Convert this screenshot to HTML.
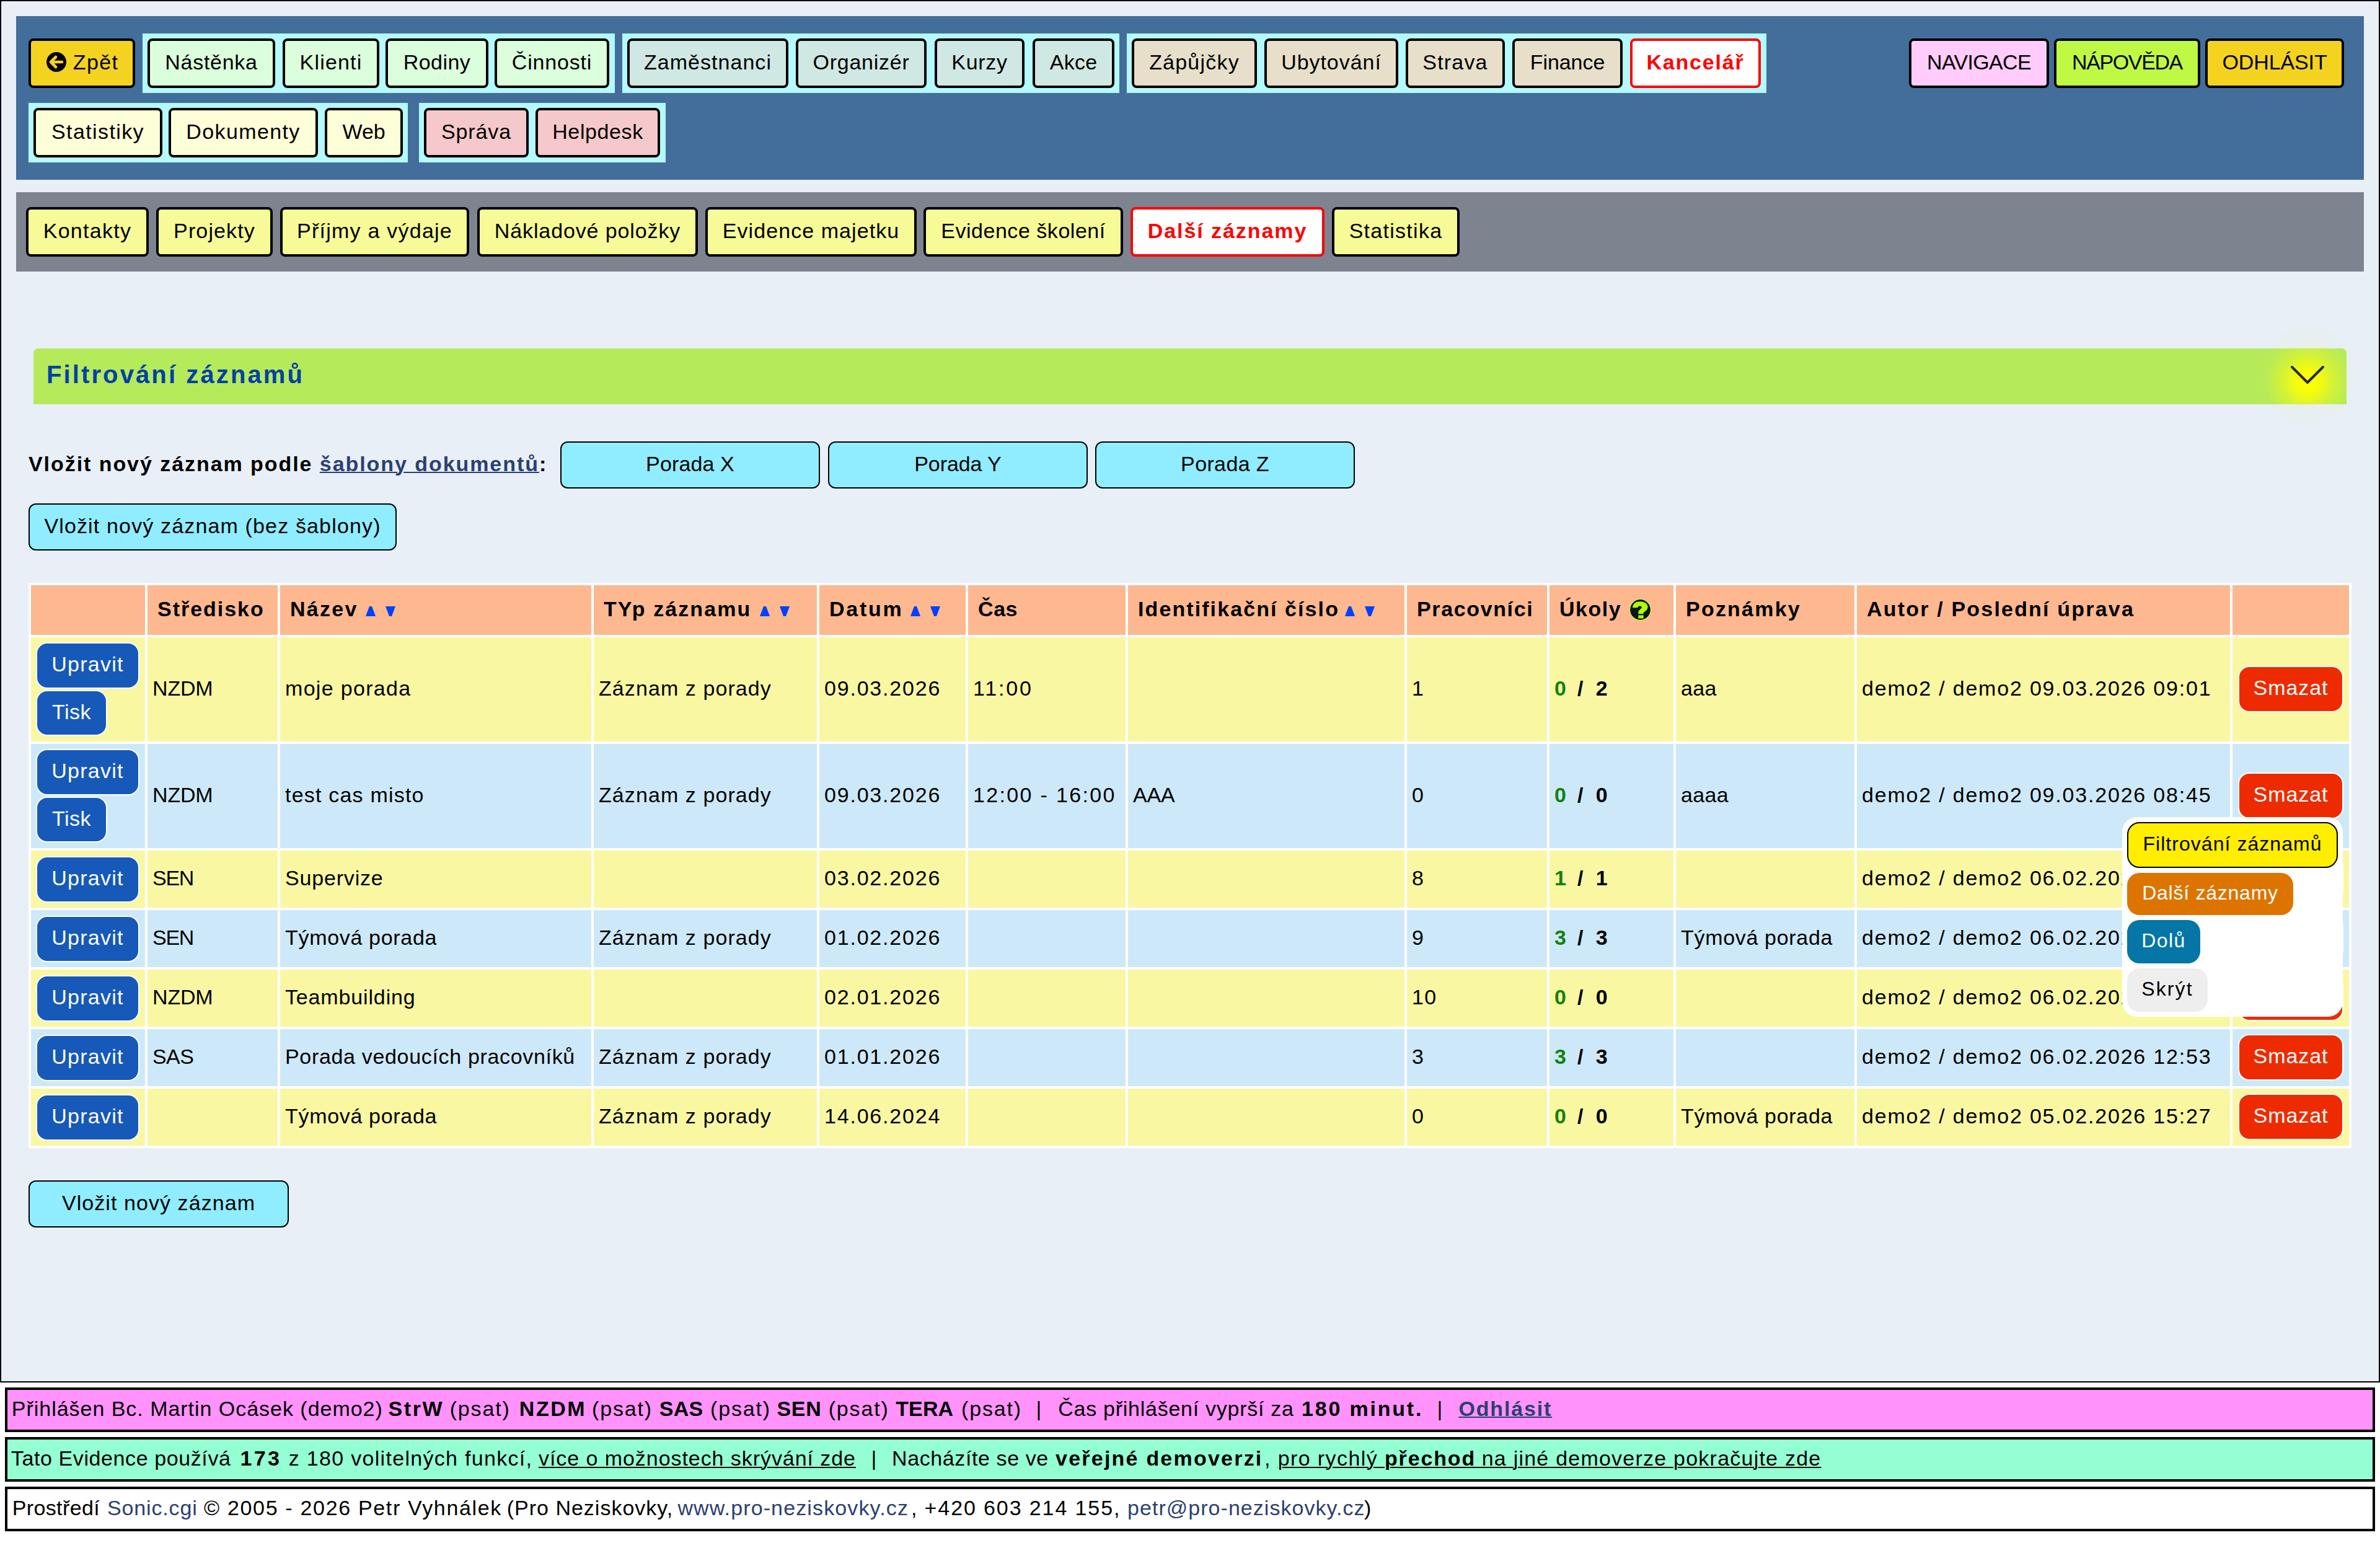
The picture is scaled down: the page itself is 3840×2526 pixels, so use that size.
<!DOCTYPE html><html><head><meta charset="utf-8"><style>
html,body{margin:0;padding:0}
body{width:3840px;height:2526px;position:relative;overflow:hidden;background:#fff;font-family:"Liberation Sans", sans-serif;font-size:34px;color:#000;font-kerning:normal}
.a{position:absolute;box-sizing:content-box}
.t{position:relative;top:-2px}
.ft .t{top:0}
.ttl .t{top:-3px}
.fc{display:flex;align-items:center;justify-content:center;white-space:nowrap}
.cell{display:flex;align-items:center;white-space:nowrap;overflow:visible}
.grn{color:#158010}
.lk{color:#2c4070;text-decoration:underline;text-decoration-thickness:2px;text-underline-offset:1px}
.lk2{color:#2c4070}
u{text-decoration-thickness:2px;text-underline-offset:3px}
.ft{white-space:nowrap;line-height:40px}
.b{font-weight:bold}
.u{text-decoration:underline;text-decoration-thickness:2px;text-underline-offset:2px}
</style></head><body><div class="a" style="left:0px;top:0px;width:3840px;height:2230px;background:#000;"></div>
<div class="a" style="left:2px;top:2px;width:3836px;height:2226px;background:#e8eff7;"></div>
<div class="a" style="left:26px;top:26px;width:3788px;height:264px;background:#436e9b;"></div>
<div class="a" style="left:230px;top:54px;width:762px;height:96px;background:#b3f9fd;"></div>
<div class="a" style="left:1004px;top:54px;width:802px;height:96px;background:#b3f9fd;"></div>
<div class="a" style="left:1818px;top:54px;width:1032px;height:96px;background:#b3f9fd;"></div>
<div class="a" style="left:46px;top:166px;width:612px;height:96px;background:#b3f9fd;"></div>
<div class="a" style="left:676px;top:166px;width:398px;height:96px;background:#b3f9fd;"></div>
<div class="a fc" style="left:46px;top:62px;width:164px;height:72px;background:#f4d320;border:4px solid #000;border-radius:8px;"><svg width="32" height="32" viewBox="0 0 32 32" style="margin-right:11px;margin-left:2px;flex:none;position:relative;top:-2px"><circle cx="16" cy="16" r="16" fill="#000"/><path d="M7 16 L15 8 M7 16 L15 24 M7 16 L25 16" stroke="#f4d320" stroke-width="4.6" stroke-linecap="round" fill="none"/></svg><span><span class="t" style="letter-spacing:1.36px">Zpět</span></span></div>
<div class="a fc" style="left:238px;top:62px;width:198px;height:72px;background:#dbffdc;border:4px solid #000;border-radius:8px;"><span><span class="t" style="letter-spacing:0.71px">Nástěnka</span></span></div>
<div class="a fc" style="left:456px;top:62px;width:148px;height:72px;background:#dbffdc;border:4px solid #000;border-radius:8px;"><span><span class="t" style="letter-spacing:1.17px">Klienti</span></span></div>
<div class="a fc" style="left:622px;top:62px;width:158px;height:72px;background:#dbffdc;border:4px solid #000;border-radius:8px;"><span><span class="t" style="letter-spacing:0.43px">Rodiny</span></span></div>
<div class="a fc" style="left:798px;top:62px;width:177px;height:72px;background:#dbffdc;border:4px solid #000;border-radius:8px;"><span><span class="t" style="letter-spacing:0.83px">Činnosti</span></span></div>
<div class="a fc" style="left:1012px;top:62px;width:252px;height:72px;background:#d0e8e3;border:4px solid #000;border-radius:8px;"><span><span class="t" style="letter-spacing:1.03px">Zaměstnanci</span></span></div>
<div class="a fc" style="left:1284px;top:62px;width:203px;height:72px;background:#d0e8e3;border:4px solid #000;border-radius:8px;"><span><span class="t" style="letter-spacing:0.76px">Organizér</span></span></div>
<div class="a fc" style="left:1508px;top:62px;width:137px;height:72px;background:#d0e8e3;border:4px solid #000;border-radius:8px;"><span><span class="t" style="letter-spacing:0.67px">Kurzy</span></span></div>
<div class="a fc" style="left:1666px;top:62px;width:124px;height:72px;background:#d0e8e3;border:4px solid #000;border-radius:8px;"><span><span class="t" style="letter-spacing:0.25px">Akce</span></span></div>
<div class="a fc" style="left:1826px;top:62px;width:194px;height:72px;background:#e7dfca;border:4px solid #000;border-radius:8px;"><span><span class="t" style="letter-spacing:1.21px">Zápůjčky</span></span></div>
<div class="a fc" style="left:2040px;top:62px;width:208px;height:72px;background:#e7dfca;border:4px solid #000;border-radius:8px;"><span><span class="t" style="letter-spacing:0.96px">Ubytování</span></span></div>
<div class="a fc" style="left:2268px;top:62px;width:152px;height:72px;background:#e7dfca;border:4px solid #000;border-radius:8px;"><span><span class="t" style="letter-spacing:1.20px">Strava</span></span></div>
<div class="a fc" style="left:2440px;top:62px;width:170px;height:72px;background:#e7dfca;border:4px solid #000;border-radius:8px;"><span><span class="t" style="letter-spacing:-0.06px">Finance</span></span></div>
<div class="a fc" style="left:2630px;top:62px;width:203px;height:72px;background:#fff;border:4px solid #f00;border-radius:8px;color:#f00;font-weight:bold;"><span><span class="t" style="letter-spacing:1.82px">Kancelář</span></span></div>
<div class="a fc" style="left:3080px;top:62px;width:218px;height:72px;background:#ffccfb;border:4px solid #000;border-radius:8px;"><span><span class="t" style="letter-spacing:-0.67px">NAVIGACE</span></span></div>
<div class="a fc" style="left:3314px;top:62px;width:228px;height:72px;background:#bff944;border:4px solid #000;border-radius:8px;"><span><span class="t" style="letter-spacing:-1.39px">NÁPOVĚDA</span></span></div>
<div class="a fc" style="left:3558px;top:62px;width:216px;height:72px;background:#f4d320;border:4px solid #000;border-radius:8px;"><span><span class="t" style="letter-spacing:-0.10px">ODHLÁSIT</span></span></div>
<div class="a fc" style="left:54px;top:174px;width:200px;height:72px;background:#fdffd8;border:4px solid #000;border-radius:8px;"><span><span class="t" style="letter-spacing:1.39px">Statistiky</span></span></div>
<div class="a fc" style="left:272px;top:174px;width:233px;height:72px;background:#fdffd8;border:4px solid #000;border-radius:8px;"><span><span class="t" style="letter-spacing:1.39px">Dokumenty</span></span></div>
<div class="a fc" style="left:524px;top:174px;width:118px;height:72px;background:#fdffd8;border:4px solid #000;border-radius:8px;"><span><span class="t" style="letter-spacing:-0.18px">Web</span></span></div>
<div class="a fc" style="left:684px;top:174px;width:161px;height:72px;background:#f5c9cb;border:4px solid #000;border-radius:8px;"><span><span class="t" style="letter-spacing:0.85px">Správa</span></span></div>
<div class="a fc" style="left:864px;top:174px;width:193px;height:72px;background:#f5c9cb;border:4px solid #000;border-radius:8px;"><span><span class="t" style="letter-spacing:0.60px">Helpdesk</span></span></div>
<div class="a" style="left:26px;top:310px;width:3788px;height:128px;background:#7e8390;"></div>
<div class="a fc" style="left:42px;top:334px;width:190px;height:72px;background:#f7fb97;border:4px solid #000;border-radius:8px;"><span><span class="t" style="letter-spacing:1.29px">Kontakty</span></span></div>
<div class="a fc" style="left:252px;top:334px;width:180px;height:72px;background:#f7fb97;border:4px solid #000;border-radius:8px;"><span><span class="t" style="letter-spacing:1.12px">Projekty</span></span></div>
<div class="a fc" style="left:452px;top:334px;width:297px;height:72px;background:#f7fb97;border:4px solid #000;border-radius:8px;"><span><span class="t" style="letter-spacing:1.24px">Příjmy a výdaje</span></span></div>
<div class="a fc" style="left:770px;top:334px;width:348px;height:72px;background:#f7fb97;border:4px solid #000;border-radius:8px;"><span><span class="t" style="letter-spacing:0.88px">Nákladové položky</span></span></div>
<div class="a fc" style="left:1138px;top:334px;width:333px;height:72px;background:#f7fb97;border:4px solid #000;border-radius:8px;"><span><span class="t" style="letter-spacing:1.07px">Evidence majetku</span></span></div>
<div class="a fc" style="left:1490px;top:334px;width:314px;height:72px;background:#f7fb97;border:4px solid #000;border-radius:8px;"><span><span class="t" style="letter-spacing:0.53px">Evidence školení</span></span></div>
<div class="a fc" style="left:2149px;top:334px;width:198px;height:72px;background:#f7fb97;border:4px solid #000;border-radius:8px;"><span><span class="t" style="letter-spacing:1.28px">Statistika</span></span></div>
<div class="a fc" style="left:1824px;top:334px;width:305px;height:72px;background:#fff;border:4px solid #f00;border-radius:8px;color:#f00;font-weight:bold;"><span><span class="t" style="letter-spacing:1.94px">Další záznamy</span></span></div>
<div class="a" style="left:3613px;top:495px;width:220px;height:220px;border-radius:50%;background:radial-gradient(circle closest-side, rgba(236,242,190,.6) 0%, rgba(234,240,215,.3) 50%, rgba(232,239,247,0) 80%)"></div>
<div class="a" style="left:54px;top:562px;width:3732px;height:90px;background:#b5ea5b;border-radius:8px 8px 0 0;overflow:hidden"><div class="a" style="left:3559px;top:-57px;width:220px;height:220px;border-radius:50%;background:radial-gradient(circle closest-side, rgba(255,255,0,1) 0%, rgba(255,255,0,.9) 16%, rgba(240,250,20,.5) 38%, rgba(200,240,60,.15) 62%, rgba(181,234,91,0) 90%)"></div></div>
<div class="a ttl" style="left:75px;top:562px;height:90px;display:flex;align-items:center;color:#0040a8;font-weight:bold;font-size:40px;white-space:nowrap"><span class="t" style="letter-spacing:3.11px">Filtrování záznamů</span></div>
<svg class="a" style="left:3693px;top:586px" width="60" height="40" viewBox="0 0 60 40"><path d="M5 6 L30 31 L55 6" stroke="#232930" stroke-width="4" stroke-linecap="round" stroke-linejoin="round" fill="none"/></svg>
<div class="a" style="left:46px;top:712px;height:76px;display:flex;align-items:center;font-weight:bold;white-space:nowrap"><span><span class="t" style="letter-spacing:1.94px">Vložit nový záznam podle </span><a class="lk"><span class="t" style="letter-spacing:1.94px">šablony dokumentů</span></a><span class="t" style="letter-spacing:2.47px">:</span></span></div>
<div class="a fc" style="left:904px;top:712px;width:415px;height:72px;background:#8fedff;border:2px solid #000;border-radius:12px;"><span><span class="t" style="letter-spacing:0.13px">Porada X</span></span></div>
<div class="a fc" style="left:1336px;top:712px;width:415px;height:72px;background:#8fedff;border:2px solid #000;border-radius:12px;"><span><span class="t" style="letter-spacing:-0.09px">Porada Y</span></span></div>
<div class="a fc" style="left:1767px;top:712px;width:415px;height:72px;background:#8fedff;border:2px solid #000;border-radius:12px;"><span><span class="t" style="letter-spacing:0.37px">Porada Z</span></span></div>
<div class="a fc" style="left:46px;top:812px;width:590px;height:72px;background:#8fedff;border:2px solid #000;border-radius:12px;"><span><span class="t" style="letter-spacing:1.15px">Vložit nový záznam (bez šablony)</span></span></div>
<div class="a fc" style="left:46px;top:1904px;width:416px;height:72px;background:#8fedff;border:2px solid #000;border-radius:12px;"><span><span class="t" style="letter-spacing:1.07px">Vložit nový záznam</span></span></div>
<div class="a" style="left:46px;top:940px;width:3748px;height:912px;background:#fff;"></div>
<div class="a cell" style="left:50px;top:944px;width:168px;height:80px;background:#fdb88f;padding-left:16px;font-weight:bold;"><span></span></div>
<div class="a cell" style="left:238px;top:944px;width:194px;height:80px;background:#fdb88f;padding-left:16px;font-weight:bold;"><span><span class="t" style="letter-spacing:1.97px">Středisko</span></span></div>
<div class="a cell" style="left:452px;top:944px;width:486px;height:80px;background:#fdb88f;padding-left:16px;font-weight:bold;"><span><span class="t" style="letter-spacing:2.26px">Název</span></span></div>
<div class="a cell" style="left:958px;top:944px;width:344px;height:80px;background:#fdb88f;padding-left:16px;font-weight:bold;"><span><span class="t" style="letter-spacing:2.09px">TYp záznamu</span></span></div>
<div class="a cell" style="left:1322px;top:944px;width:220px;height:80px;background:#fdb88f;padding-left:16px;font-weight:bold;"><span><span class="t" style="letter-spacing:2.76px">Datum</span></span></div>
<div class="a cell" style="left:1562px;top:944px;width:238px;height:80px;background:#fdb88f;padding-left:16px;font-weight:bold;"><span><span class="t" style="letter-spacing:0.58px">Čas</span></span></div>
<div class="a cell" style="left:1820px;top:944px;width:430px;height:80px;background:#fdb88f;padding-left:16px;font-weight:bold;"><span><span class="t" style="letter-spacing:2.09px">Identifikační číslo</span></span></div>
<div class="a cell" style="left:2270px;top:944px;width:210px;height:80px;background:#fdb88f;padding-left:16px;font-weight:bold;"><span><span class="t" style="letter-spacing:1.63px">Pracovníci</span></span></div>
<div class="a cell" style="left:2500px;top:944px;width:184px;height:80px;background:#fdb88f;padding-left:16px;font-weight:bold;"><span><span class="t" style="letter-spacing:1.52px">Úkoly</span></span></div>
<div class="a cell" style="left:2704px;top:944px;width:272px;height:80px;background:#fdb88f;padding-left:16px;font-weight:bold;"><span><span class="t" style="letter-spacing:2.22px">Poznámky</span></span></div>
<div class="a cell" style="left:2996px;top:944px;width:586px;height:80px;background:#fdb88f;padding-left:16px;font-weight:bold;"><span><span class="t" style="letter-spacing:2.19px">Autor / Poslední úprava</span></span></div>
<div class="a cell" style="left:3602px;top:944px;width:172px;height:80px;background:#fdb88f;padding-left:16px;font-weight:bold;"><span></span></div>
<svg class="a" style="left:590px;top:978px" width="16" height="16" viewBox="0 0 16 16"><path d="M6 0H10L16 16H0Z" fill="#0040ff"/></svg><svg class="a" style="left:622px;top:978px" width="16" height="16" viewBox="0 0 16 16"><path d="M0 0H16L10 16H6Z" fill="#0040ff"/></svg><svg class="a" style="left:1226px;top:978px" width="16" height="16" viewBox="0 0 16 16"><path d="M6 0H10L16 16H0Z" fill="#0040ff"/></svg><svg class="a" style="left:1258px;top:978px" width="16" height="16" viewBox="0 0 16 16"><path d="M0 0H16L10 16H6Z" fill="#0040ff"/></svg><svg class="a" style="left:1469px;top:978px" width="16" height="16" viewBox="0 0 16 16"><path d="M6 0H10L16 16H0Z" fill="#0040ff"/></svg><svg class="a" style="left:1501px;top:978px" width="16" height="16" viewBox="0 0 16 16"><path d="M0 0H16L10 16H6Z" fill="#0040ff"/></svg><svg class="a" style="left:2170px;top:978px" width="16" height="16" viewBox="0 0 16 16"><path d="M6 0H10L16 16H0Z" fill="#0040ff"/></svg><svg class="a" style="left:2202px;top:978px" width="16" height="16" viewBox="0 0 16 16"><path d="M0 0H16L10 16H6Z" fill="#0040ff"/></svg>
<svg class="a" style="left:2629px;top:966px" width="35" height="35" viewBox="0 0 35 35"><circle cx="17.5" cy="17.5" r="17" fill="#0c1424" stroke="#d8ff20" stroke-width="1.2"/><path d="M5.1,14.3 C5.1,7.5 10.5,4.3 17.5,4.3 C24.5,4.3 29.6,8 29.6,13 C29.6,17.5 25.5,20 22.7,22 L22.7,24.3 L14.3,24.3 L14.3,21.5 C14.3,18 19.8,16 19.8,13.7 C19.8,12.3 18.5,11.6 17,11.6 C15,11.6 13.3,12.5 13.3,14.3 Z" fill="#b0ff00"/><rect x="14.3" y="26.4" width="8.4" height="5.1" fill="#b0ff00"/></svg>
<div class="a cell" style="left:50px;top:1028px;width:176px;height:168px;background:#f9f7a2;padding-left:8px;"><span></span></div>
<div class="a fc" style="left:58px;top:1036px;width:163px;height:71px;background:#1659b9;border:2px solid #fff;border-radius:18px;color:#fff;"><span><span class="t" style="letter-spacing:1.27px">Upravit</span></span></div>
<div class="a fc" style="left:58px;top:1113px;width:111px;height:70px;background:#1659b9;border:2px solid #fff;border-radius:18px;color:#fff;"><span><span class="t" style="letter-spacing:0.50px">Tisk</span></span></div>
<div class="a cell" style="left:238px;top:1028px;width:202px;height:168px;background:#f9f7a2;padding-left:8px;"><span><span class="t" style="letter-spacing:-0.17px">NZDM</span></span></div>
<div class="a cell" style="left:452px;top:1028px;width:494px;height:168px;background:#f9f7a2;padding-left:8px;"><span><span class="t" style="letter-spacing:1.31px">moje porada</span></span></div>
<div class="a cell" style="left:958px;top:1028px;width:352px;height:168px;background:#f9f7a2;padding-left:8px;"><span><span class="t" style="letter-spacing:1.08px">Záznam z porady</span></span></div>
<div class="a cell" style="left:1322px;top:1028px;width:228px;height:168px;background:#f9f7a2;padding-left:8px;"><span><span class="t" style="letter-spacing:1.80px">09.03.2026</span></span></div>
<div class="a cell" style="left:1562px;top:1028px;width:246px;height:168px;background:#f9f7a2;padding-left:8px;"><span><span class="t" style="letter-spacing:2.83px">11:00</span></span></div>
<div class="a cell" style="left:1820px;top:1028px;width:438px;height:168px;background:#f9f7a2;padding-left:8px;"><span></span></div>
<div class="a cell" style="left:2270px;top:1028px;width:218px;height:168px;background:#f9f7a2;padding-left:8px;"><span><span class="t" style="letter-spacing:1.44px">1</span></span></div>
<div class="a cell" style="left:2500px;top:1028px;width:192px;height:168px;background:#f9f7a2;padding-left:8px;"><span><b><span class="t grn" style="letter-spacing:3.34px">0</span><span class="t" style="letter-spacing:5.38px"> / </span><span class="t" style="letter-spacing:3.34px">2</span></b></span></div>
<div class="a cell" style="left:2704px;top:1028px;width:280px;height:168px;background:#f9f7a2;padding-left:8px;"><span><span class="t" style="letter-spacing:0.30px">aaa</span></span></div>
<div class="a cell" style="left:2996px;top:1028px;width:594px;height:168px;background:#f9f7a2;padding-left:8px;"><span><span class="t" style="letter-spacing:1.80px">demo2 / demo2 09.03.2026 09:01</span></span></div>
<div class="a cell" style="left:3602px;top:1028px;width:180px;height:168px;background:#f9f7a2;padding-left:8px;"><span></span></div>
<div class="a fc" style="left:3611px;top:1074px;width:166px;height:71px;background:#ee2b00;border:2px solid #fff;border-radius:18px;color:#fff;"><span><span class="t" style="letter-spacing:0.93px">Smazat</span></span></div>
<div class="a cell" style="left:50px;top:1200px;width:176px;height:168px;background:#cde9f9;padding-left:8px;"><span></span></div>
<div class="a fc" style="left:58px;top:1208px;width:163px;height:71px;background:#1659b9;border:2px solid #fff;border-radius:18px;color:#fff;"><span><span class="t" style="letter-spacing:1.27px">Upravit</span></span></div>
<div class="a fc" style="left:58px;top:1285px;width:111px;height:70px;background:#1659b9;border:2px solid #fff;border-radius:18px;color:#fff;"><span><span class="t" style="letter-spacing:0.50px">Tisk</span></span></div>
<div class="a cell" style="left:238px;top:1200px;width:202px;height:168px;background:#cde9f9;padding-left:8px;"><span><span class="t" style="letter-spacing:-0.17px">NZDM</span></span></div>
<div class="a cell" style="left:452px;top:1200px;width:494px;height:168px;background:#cde9f9;padding-left:8px;"><span><span class="t" style="letter-spacing:1.20px">test cas misto</span></span></div>
<div class="a cell" style="left:958px;top:1200px;width:352px;height:168px;background:#cde9f9;padding-left:8px;"><span><span class="t" style="letter-spacing:1.08px">Záznam z porady</span></span></div>
<div class="a cell" style="left:1322px;top:1200px;width:228px;height:168px;background:#cde9f9;padding-left:8px;"><span><span class="t" style="letter-spacing:1.80px">09.03.2026</span></span></div>
<div class="a cell" style="left:1562px;top:1200px;width:246px;height:168px;background:#cde9f9;padding-left:8px;"><span><span class="t" style="letter-spacing:2.34px">12:00 - 16:00</span></span></div>
<div class="a cell" style="left:1820px;top:1200px;width:438px;height:168px;background:#cde9f9;padding-left:8px;"><span><span class="t" style="letter-spacing:-0.20px">AAA</span></span></div>
<div class="a cell" style="left:2270px;top:1200px;width:218px;height:168px;background:#cde9f9;padding-left:8px;"><span><span class="t" style="letter-spacing:1.44px">0</span></span></div>
<div class="a cell" style="left:2500px;top:1200px;width:192px;height:168px;background:#cde9f9;padding-left:8px;"><span><b><span class="t grn" style="letter-spacing:3.34px">0</span><span class="t" style="letter-spacing:5.38px"> / </span><span class="t" style="letter-spacing:3.34px">0</span></b></span></div>
<div class="a cell" style="left:2704px;top:1200px;width:280px;height:168px;background:#cde9f9;padding-left:8px;"><span><span class="t" style="letter-spacing:0.30px">aaaa</span></span></div>
<div class="a cell" style="left:2996px;top:1200px;width:594px;height:168px;background:#cde9f9;padding-left:8px;"><span><span class="t" style="letter-spacing:1.80px">demo2 / demo2 09.03.2026 08:45</span></span></div>
<div class="a cell" style="left:3602px;top:1200px;width:180px;height:168px;background:#cde9f9;padding-left:8px;"><span></span></div>
<div class="a fc" style="left:3611px;top:1246px;width:166px;height:71px;background:#ee2b00;border:2px solid #fff;border-radius:18px;color:#fff;"><span><span class="t" style="letter-spacing:0.93px">Smazat</span></span></div>
<div class="a cell" style="left:50px;top:1372px;width:176px;height:92px;background:#f9f7a2;padding-left:8px;"><span></span></div>
<div class="a fc" style="left:58px;top:1381px;width:163px;height:71px;background:#1659b9;border:2px solid #fff;border-radius:18px;color:#fff;"><span><span class="t" style="letter-spacing:1.27px">Upravit</span></span></div>
<div class="a cell" style="left:238px;top:1372px;width:202px;height:92px;background:#f9f7a2;padding-left:8px;"><span><span class="t" style="letter-spacing:-1.28px">SEN</span></span></div>
<div class="a cell" style="left:452px;top:1372px;width:494px;height:92px;background:#f9f7a2;padding-left:8px;"><span><span class="t" style="letter-spacing:0.82px">Supervize</span></span></div>
<div class="a cell" style="left:958px;top:1372px;width:352px;height:92px;background:#f9f7a2;padding-left:8px;"><span></span></div>
<div class="a cell" style="left:1322px;top:1372px;width:228px;height:92px;background:#f9f7a2;padding-left:8px;"><span><span class="t" style="letter-spacing:1.80px">03.02.2026</span></span></div>
<div class="a cell" style="left:1562px;top:1372px;width:246px;height:92px;background:#f9f7a2;padding-left:8px;"><span></span></div>
<div class="a cell" style="left:1820px;top:1372px;width:438px;height:92px;background:#f9f7a2;padding-left:8px;"><span></span></div>
<div class="a cell" style="left:2270px;top:1372px;width:218px;height:92px;background:#f9f7a2;padding-left:8px;"><span><span class="t" style="letter-spacing:1.44px">8</span></span></div>
<div class="a cell" style="left:2500px;top:1372px;width:192px;height:92px;background:#f9f7a2;padding-left:8px;"><span><b><span class="t grn" style="letter-spacing:3.34px">1</span><span class="t" style="letter-spacing:5.38px"> / </span><span class="t" style="letter-spacing:3.34px">1</span></b></span></div>
<div class="a cell" style="left:2704px;top:1372px;width:280px;height:92px;background:#f9f7a2;padding-left:8px;"><span></span></div>
<div class="a cell" style="left:2996px;top:1372px;width:594px;height:92px;background:#f9f7a2;padding-left:8px;"><span><span class="t" style="letter-spacing:1.80px">demo2 / demo2 06.02.2026 13:10</span></span></div>
<div class="a cell" style="left:3602px;top:1372px;width:180px;height:92px;background:#f9f7a2;padding-left:8px;"><span></span></div>
<div class="a fc" style="left:3611px;top:1380px;width:166px;height:71px;background:#ee2b00;border:2px solid #fff;border-radius:18px;color:#fff;"><span><span class="t" style="letter-spacing:0.93px">Smazat</span></span></div>
<div class="a cell" style="left:50px;top:1468px;width:176px;height:92px;background:#cde9f9;padding-left:8px;"><span></span></div>
<div class="a fc" style="left:58px;top:1477px;width:163px;height:71px;background:#1659b9;border:2px solid #fff;border-radius:18px;color:#fff;"><span><span class="t" style="letter-spacing:1.27px">Upravit</span></span></div>
<div class="a cell" style="left:238px;top:1468px;width:202px;height:92px;background:#cde9f9;padding-left:8px;"><span><span class="t" style="letter-spacing:-1.28px">SEN</span></span></div>
<div class="a cell" style="left:452px;top:1468px;width:494px;height:92px;background:#cde9f9;padding-left:8px;"><span><span class="t" style="letter-spacing:0.68px">Týmová porada</span></span></div>
<div class="a cell" style="left:958px;top:1468px;width:352px;height:92px;background:#cde9f9;padding-left:8px;"><span><span class="t" style="letter-spacing:1.08px">Záznam z porady</span></span></div>
<div class="a cell" style="left:1322px;top:1468px;width:228px;height:92px;background:#cde9f9;padding-left:8px;"><span><span class="t" style="letter-spacing:1.80px">01.02.2026</span></span></div>
<div class="a cell" style="left:1562px;top:1468px;width:246px;height:92px;background:#cde9f9;padding-left:8px;"><span></span></div>
<div class="a cell" style="left:1820px;top:1468px;width:438px;height:92px;background:#cde9f9;padding-left:8px;"><span></span></div>
<div class="a cell" style="left:2270px;top:1468px;width:218px;height:92px;background:#cde9f9;padding-left:8px;"><span><span class="t" style="letter-spacing:1.44px">9</span></span></div>
<div class="a cell" style="left:2500px;top:1468px;width:192px;height:92px;background:#cde9f9;padding-left:8px;"><span><b><span class="t grn" style="letter-spacing:3.34px">3</span><span class="t" style="letter-spacing:5.38px"> / </span><span class="t" style="letter-spacing:3.34px">3</span></b></span></div>
<div class="a cell" style="left:2704px;top:1468px;width:280px;height:92px;background:#cde9f9;padding-left:8px;"><span><span class="t" style="letter-spacing:0.68px">Týmová porada</span></span></div>
<div class="a cell" style="left:2996px;top:1468px;width:594px;height:92px;background:#cde9f9;padding-left:8px;"><span><span class="t" style="letter-spacing:1.80px">demo2 / demo2 06.02.2026 13:05</span></span></div>
<div class="a cell" style="left:3602px;top:1468px;width:180px;height:92px;background:#cde9f9;padding-left:8px;"><span></span></div>
<div class="a fc" style="left:3611px;top:1476px;width:166px;height:71px;background:#ee2b00;border:2px solid #fff;border-radius:18px;color:#fff;"><span><span class="t" style="letter-spacing:0.93px">Smazat</span></span></div>
<div class="a cell" style="left:50px;top:1564px;width:176px;height:92px;background:#f9f7a2;padding-left:8px;"><span></span></div>
<div class="a fc" style="left:58px;top:1573px;width:163px;height:71px;background:#1659b9;border:2px solid #fff;border-radius:18px;color:#fff;"><span><span class="t" style="letter-spacing:1.27px">Upravit</span></span></div>
<div class="a cell" style="left:238px;top:1564px;width:202px;height:92px;background:#f9f7a2;padding-left:8px;"><span><span class="t" style="letter-spacing:-0.17px">NZDM</span></span></div>
<div class="a cell" style="left:452px;top:1564px;width:494px;height:92px;background:#f9f7a2;padding-left:8px;"><span><span class="t" style="letter-spacing:0.85px">Teambuilding</span></span></div>
<div class="a cell" style="left:958px;top:1564px;width:352px;height:92px;background:#f9f7a2;padding-left:8px;"><span></span></div>
<div class="a cell" style="left:1322px;top:1564px;width:228px;height:92px;background:#f9f7a2;padding-left:8px;"><span><span class="t" style="letter-spacing:1.80px">02.01.2026</span></span></div>
<div class="a cell" style="left:1562px;top:1564px;width:246px;height:92px;background:#f9f7a2;padding-left:8px;"><span></span></div>
<div class="a cell" style="left:1820px;top:1564px;width:438px;height:92px;background:#f9f7a2;padding-left:8px;"><span></span></div>
<div class="a cell" style="left:2270px;top:1564px;width:218px;height:92px;background:#f9f7a2;padding-left:8px;"><span><span class="t" style="letter-spacing:1.45px">10</span></span></div>
<div class="a cell" style="left:2500px;top:1564px;width:192px;height:92px;background:#f9f7a2;padding-left:8px;"><span><b><span class="t grn" style="letter-spacing:3.34px">0</span><span class="t" style="letter-spacing:5.38px"> / </span><span class="t" style="letter-spacing:3.34px">0</span></b></span></div>
<div class="a cell" style="left:2704px;top:1564px;width:280px;height:92px;background:#f9f7a2;padding-left:8px;"><span></span></div>
<div class="a cell" style="left:2996px;top:1564px;width:594px;height:92px;background:#f9f7a2;padding-left:8px;"><span><span class="t" style="letter-spacing:1.80px">demo2 / demo2 06.02.2026 12:58</span></span></div>
<div class="a cell" style="left:3602px;top:1564px;width:180px;height:92px;background:#f9f7a2;padding-left:8px;"><span></span></div>
<div class="a fc" style="left:3611px;top:1572px;width:166px;height:71px;background:#ee2b00;border:2px solid #fff;border-radius:18px;color:#fff;"><span><span class="t" style="letter-spacing:0.93px">Smazat</span></span></div>
<div class="a cell" style="left:50px;top:1660px;width:176px;height:92px;background:#cde9f9;padding-left:8px;"><span></span></div>
<div class="a fc" style="left:58px;top:1669px;width:163px;height:71px;background:#1659b9;border:2px solid #fff;border-radius:18px;color:#fff;"><span><span class="t" style="letter-spacing:1.27px">Upravit</span></span></div>
<div class="a cell" style="left:238px;top:1660px;width:202px;height:92px;background:#cde9f9;padding-left:8px;"><span><span class="t" style="letter-spacing:-0.58px">SAS</span></span></div>
<div class="a cell" style="left:452px;top:1660px;width:494px;height:92px;background:#cde9f9;padding-left:8px;"><span><span class="t" style="letter-spacing:0.67px">Porada vedoucích pracovníků</span></span></div>
<div class="a cell" style="left:958px;top:1660px;width:352px;height:92px;background:#cde9f9;padding-left:8px;"><span><span class="t" style="letter-spacing:1.08px">Záznam z porady</span></span></div>
<div class="a cell" style="left:1322px;top:1660px;width:228px;height:92px;background:#cde9f9;padding-left:8px;"><span><span class="t" style="letter-spacing:1.80px">01.01.2026</span></span></div>
<div class="a cell" style="left:1562px;top:1660px;width:246px;height:92px;background:#cde9f9;padding-left:8px;"><span></span></div>
<div class="a cell" style="left:1820px;top:1660px;width:438px;height:92px;background:#cde9f9;padding-left:8px;"><span></span></div>
<div class="a cell" style="left:2270px;top:1660px;width:218px;height:92px;background:#cde9f9;padding-left:8px;"><span><span class="t" style="letter-spacing:1.44px">3</span></span></div>
<div class="a cell" style="left:2500px;top:1660px;width:192px;height:92px;background:#cde9f9;padding-left:8px;"><span><b><span class="t grn" style="letter-spacing:3.34px">3</span><span class="t" style="letter-spacing:5.38px"> / </span><span class="t" style="letter-spacing:3.34px">3</span></b></span></div>
<div class="a cell" style="left:2704px;top:1660px;width:280px;height:92px;background:#cde9f9;padding-left:8px;"><span></span></div>
<div class="a cell" style="left:2996px;top:1660px;width:594px;height:92px;background:#cde9f9;padding-left:8px;"><span><span class="t" style="letter-spacing:1.80px">demo2 / demo2 06.02.2026 12:53</span></span></div>
<div class="a cell" style="left:3602px;top:1660px;width:180px;height:92px;background:#cde9f9;padding-left:8px;"><span></span></div>
<div class="a fc" style="left:3611px;top:1668px;width:166px;height:71px;background:#ee2b00;border:2px solid #fff;border-radius:18px;color:#fff;"><span><span class="t" style="letter-spacing:0.93px">Smazat</span></span></div>
<div class="a cell" style="left:50px;top:1756px;width:176px;height:92px;background:#f9f7a2;padding-left:8px;"><span></span></div>
<div class="a fc" style="left:58px;top:1765px;width:163px;height:71px;background:#1659b9;border:2px solid #fff;border-radius:18px;color:#fff;"><span><span class="t" style="letter-spacing:1.27px">Upravit</span></span></div>
<div class="a cell" style="left:238px;top:1756px;width:202px;height:92px;background:#f9f7a2;padding-left:8px;"><span></span></div>
<div class="a cell" style="left:452px;top:1756px;width:494px;height:92px;background:#f9f7a2;padding-left:8px;"><span><span class="t" style="letter-spacing:0.68px">Týmová porada</span></span></div>
<div class="a cell" style="left:958px;top:1756px;width:352px;height:92px;background:#f9f7a2;padding-left:8px;"><span><span class="t" style="letter-spacing:1.08px">Záznam z porady</span></span></div>
<div class="a cell" style="left:1322px;top:1756px;width:228px;height:92px;background:#f9f7a2;padding-left:8px;"><span><span class="t" style="letter-spacing:1.80px">14.06.2024</span></span></div>
<div class="a cell" style="left:1562px;top:1756px;width:246px;height:92px;background:#f9f7a2;padding-left:8px;"><span></span></div>
<div class="a cell" style="left:1820px;top:1756px;width:438px;height:92px;background:#f9f7a2;padding-left:8px;"><span></span></div>
<div class="a cell" style="left:2270px;top:1756px;width:218px;height:92px;background:#f9f7a2;padding-left:8px;"><span><span class="t" style="letter-spacing:1.44px">0</span></span></div>
<div class="a cell" style="left:2500px;top:1756px;width:192px;height:92px;background:#f9f7a2;padding-left:8px;"><span><b><span class="t grn" style="letter-spacing:3.34px">0</span><span class="t" style="letter-spacing:5.38px"> / </span><span class="t" style="letter-spacing:3.34px">0</span></b></span></div>
<div class="a cell" style="left:2704px;top:1756px;width:280px;height:92px;background:#f9f7a2;padding-left:8px;"><span><span class="t" style="letter-spacing:0.68px">Týmová porada</span></span></div>
<div class="a cell" style="left:2996px;top:1756px;width:594px;height:92px;background:#f9f7a2;padding-left:8px;"><span><span class="t" style="letter-spacing:1.80px">demo2 / demo2 05.02.2026 15:27</span></span></div>
<div class="a cell" style="left:3602px;top:1756px;width:180px;height:92px;background:#f9f7a2;padding-left:8px;"><span></span></div>
<div class="a fc" style="left:3611px;top:1764px;width:166px;height:71px;background:#ee2b00;border:2px solid #fff;border-radius:18px;color:#fff;"><span><span class="t" style="letter-spacing:0.93px">Smazat</span></span></div>
<div class="a" style="left:3424px;top:1318px;width:356px;height:322px;background:#fff;border-radius:24px"></div>
<div class="a fc" style="left:3432px;top:1326px;width:336px;height:70px;background:#ffee00;border:2px solid #000;border-radius:20px;font-size:32px"><span><span class="t dj" style="letter-spacing:1.04px">Filtrování záznamů</span></span></div>
<div class="a fc" style="left:3432px;top:1408px;width:268px;height:68px;background:#de7400;border-radius:20px;color:#fff;font-size:32px"><span><span class="t dj" style="letter-spacing:0.75px">Další záznamy</span></span></div>
<div class="a fc" style="left:3432px;top:1484px;width:118px;height:70px;background:#0576a6;border-radius:20px;color:#fff;font-size:32px"><span><span class="t dj" style="letter-spacing:1.38px">Dolů</span></span></div>
<div class="a fc" style="left:3432px;top:1562px;width:130px;height:70px;background:#eeeeee;border-radius:20px;font-size:32px"><span><span class="t dj" style="letter-spacing:2.08px">Skrýt</span></span></div>
<div class="a" style="left:8px;top:2238px;width:3816px;height:64px;background:#ff93fb;border:4px solid #000"></div>
<div class="a" style="left:8px;top:2318px;width:3816px;height:64px;background:#95ffd4;border:4px solid #000"></div>
<div class="a" style="left:8px;top:2398px;width:3816px;height:64px;background:#ffffff;border:4px solid #000"></div>
<span class="a ft " style="left:18.8px;top:2252px"><span class="t" style="letter-spacing:0.97px">Přihlášen Bc. Martin Ocásek (demo2)</span></span>
<span class="a ft b" style="left:626.6px;top:2252px"><span class="t" style="letter-spacing:2.52px">StrW</span></span>
<span class="a ft " style="left:725.7px;top:2252px"><span class="t" style="letter-spacing:1.83px">(psat)</span></span>
<span class="a ft b" style="left:837.8px;top:2252px"><span class="t" style="letter-spacing:2.55px">NZDM</span></span>
<span class="a ft " style="left:955px;top:2252px"><span class="t" style="letter-spacing:1.83px">(psat)</span></span>
<span class="a ft b" style="left:1063.7px;top:2252px"><span class="t" style="letter-spacing:0.31px">SAS</span></span>
<span class="a ft " style="left:1146px;top:2252px"><span class="t" style="letter-spacing:1.83px">(psat)</span></span>
<span class="a ft b" style="left:1253.6px;top:2252px"><span class="t" style="letter-spacing:0.59px">SEN</span></span>
<span class="a ft " style="left:1336.7px;top:2252px"><span class="t" style="letter-spacing:1.83px">(psat)</span></span>
<span class="a ft b" style="left:1445.2px;top:2252px"><span class="t" style="letter-spacing:0.13px">TERA</span></span>
<span class="a ft " style="left:1551px;top:2252px"><span class="t" style="letter-spacing:1.83px">(psat)</span></span>
<span class="a ft " style="left:1671.4px;top:2252px"><span class="t" style="letter-spacing:5.64px">|</span></span>
<span class="a ft " style="left:1707.2px;top:2252px"><span class="t" style="letter-spacing:0.74px">Čas přihlášení vyprší za</span></span>
<span class="a ft b" style="left:2100px;top:2252px"><span class="t" style="letter-spacing:2.81px">180 minut.</span></span>
<span class="a ft " style="left:2318.5px;top:2252px"><span class="t" style="letter-spacing:5.64px">|</span></span>
<span class="a ft b lk" style="left:2353.4px;top:2252px"><span class="t" style="letter-spacing:1.84px">Odhlásit</span></span>
<span class="a ft " style="left:17.8px;top:2332px"><span class="t" style="letter-spacing:0.60px">Tato Evidence používá</span></span>
<span class="a ft b" style="left:387.6px;top:2332px"><span class="t" style="letter-spacing:3.35px">173</span></span>
<span class="a ft " style="left:465.8px;top:2332px"><span class="t" style="letter-spacing:1.30px">z 180 volitelných funkcí,</span></span>
<span class="a ft u" style="left:869px;top:2332px"><span class="t" style="letter-spacing:0.94px">více o možnostech skrývání zde</span></span>
<span class="a ft " style="left:1405.4px;top:2332px"><span class="t" style="letter-spacing:5.64px">|</span></span>
<span class="a ft " style="left:1439px;top:2332px"><span class="t" style="letter-spacing:0.60px">Nacházíte se ve</span></span>
<span class="a ft b" style="left:1703.1px;top:2332px"><span class="t" style="letter-spacing:2.22px">veřejné demoverzi</span></span>
<span class="a ft " style="left:2040px;top:2332px"><span class="t" style="letter-spacing:3.22px">,</span></span>
<span class="a ft u" style="left:2061.7px;top:2332px"><span class="t" style="letter-spacing:1.40px">pro rychlý </span></span>
<span class="a ft b u" style="left:2234px;top:2332px"><span class="t" style="letter-spacing:1.84px">přechod</span></span>
<span class="a ft u" style="left:2380px;top:2332px"><span class="t" style="letter-spacing:1.23px"> na jiné demoverze pokračujte zde</span></span>
<span class="a ft " style="left:19.7px;top:2412px"><span class="t" style="letter-spacing:0.38px">Prostředí</span></span>
<span class="a ft lk2" style="left:173px;top:2412px"><span class="t" style="letter-spacing:0.84px">Sonic.cgi</span></span>
<span class="a ft " style="left:329.1px;top:2412px"><span class="t" style="letter-spacing:1.67px">© 2005 - 2026 Petr Vyhnálek</span></span>
<span class="a ft " style="left:817.8px;top:2412px"><span class="t" style="letter-spacing:0.99px">(Pro Neziskovky,</span></span>
<span class="a ft lk2" style="left:1093.4px;top:2412px"><span class="t" style="letter-spacing:1.13px">www.pro-neziskovky.cz</span></span>
<span class="a ft " style="left:1470px;top:2412px"><span class="t" style="letter-spacing:3.22px">,</span></span>
<span class="a ft " style="left:1491.6px;top:2412px"><span class="t" style="letter-spacing:1.89px">+420 603 214 155,</span></span>
<span class="a ft lk2" style="left:1819px;top:2412px"><span class="t" style="letter-spacing:1.04px">petr@pro-neziskovky.cz</span></span>
<span class="a ft " style="left:2201px;top:2412px"><span class="t" style="letter-spacing:3.46px">)</span></span></body></html>
